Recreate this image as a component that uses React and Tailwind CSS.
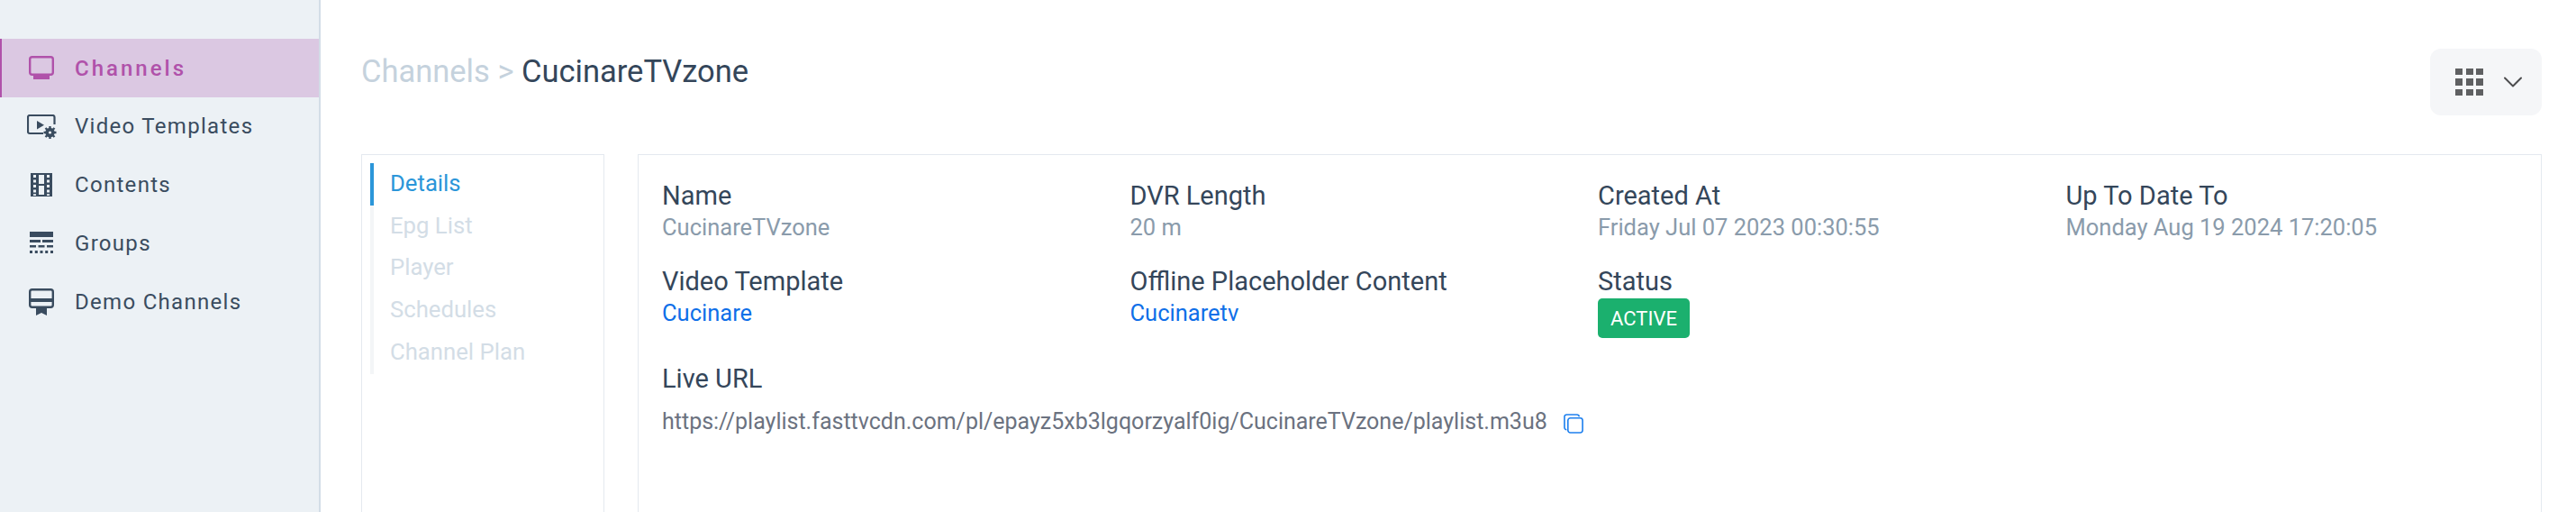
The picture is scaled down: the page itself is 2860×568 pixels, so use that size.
import { ChevronDown } from 'lucide-react'

const navItems = [
  { label: 'Channels', icon: MonitorIcon, active: true },
  { label: 'Video Templates', icon: TemplateIcon },
  { label: 'Contents', icon: FilmIcon },
  { label: 'Groups', icon: GroupsIcon },
  { label: 'Demo Channels', icon: DemoIcon },
]

const tabs = ['Epg List', 'Player', 'Schedules', 'Channel Plan']

function MonitorIcon() {
  return (
    <svg width="28" height="27" viewBox="0 0 28 27" fill="none">
      <rect x="1.2" y="1.2" width="25.6" height="19.6" rx="2.5" stroke="currentColor" strokeWidth="2.4" />
      <path d="M5 22h18v4H5z" fill="currentColor" />
    </svg>
  )
}

function TemplateIcon() {
  return (
    <svg width="33" height="27" viewBox="0 0 33 27" fill="none">
      <path d="M18 21H3a2 2 0 0 1-2-2V3a2 2 0 0 1 2-2h25.5a2 2 0 0 1 2 2v8" stroke="currentColor" strokeWidth="2.2" />
      <path d="M11 7v9.500l8-4.800z" fill="currentColor" />
      <circle cx="25.500" cy="20" r="3.400" stroke="currentColor" strokeWidth="3.600" />
      <path d="M25.500 13v3M25.500 24v3M18.500 20h3M29.500 20h3M20.500 15l2 2M28.500 23l2 2M20.500 25l2-2M28.500 17l2-2" stroke="currentColor" strokeWidth="2.400" />
    </svg>
  )
}

function FilmIcon() {
  return (
    <svg width="24" height="26" viewBox="0 0 24 26" fill="currentColor">
      <path fillRule="evenodd" d="M0 0h24v26H0zM3 2v3h3V2zm15 0v3h3V2zM3 7.500v3h3v-3zm15 0v3h3v-3zM3 13v3h3v-3zm15 0v3h3v-3zM3 18.500v3h3v-3zm15 0v3h3v-3zM9 2v10h6V2zm0 12v10h6V14zM3 23.200V25h3v-1.800zm15 0V25h3v-1.800z" />
    </svg>
  )
}

function GroupsIcon() {
  return (
    <svg width="26" height="25" viewBox="0 0 26 25" fill="currentColor">
      <path d="M0 0h26v6H0zM0 9h12v3H0zM14 9h12v3H14zM0 15h7v2.500H0zM9.500 15h7v2.500h-7zM19 15h7v2.500h-7zM0 21h3v3H0zM5.800 21h3v3h-3zM11.500 21h3v3h-3zM17.200 21h3v3h-3zM23 21h3v3h-3z" />
    </svg>
  )
}

function DemoIcon() {
  return (
    <svg width="28" height="30" viewBox="0 0 28 30" fill="none">
      <rect x="1.200" y="1.200" width="25.600" height="19.600" rx="2.500" stroke="currentColor" strokeWidth="2.400" />
      <path d="M1 11h26v4H1z" fill="currentColor" />
      <path d="M8 21h12v9l-6-3-6 3z" fill="currentColor" />
    </svg>
  )
}

function GridIcon() {
  return (
    <div className="grid grid-cols-[repeat(3,8px)] gap-x-[3.500px] gap-y-[4px]">
      {Array.from({ length: 9 }).map((_, i) => (
        <div key={i} className="w-2 h-[7.500px] bg-[#5f6062]" />
      ))}
    </div>
  )
}

function CopyIcon() {
  return (
    <svg width="22" height="22" viewBox="0 0 23 23" fill="none" stroke="#1f80ee" strokeWidth="1.700">
      <path d="M3.500 18.500A2.500 2.500 0 0 1 1 16V3.500A2.500 2.500 0 0 1 3.500 1H15.500A2.500 2.500 0 0 1 18 3.500" />
      <rect x="5" y="5" width="17" height="17" rx="2.800" />
    </svg>
  )
}

const Field = ({ label, children }) => (
  <div className="w-[519.500px]">
    <div className="text-[29px] leading-[36px] text-[#34465a]">{label}</div>
    {children}
  </div>
)

const Value = ({ children }) => (
  <div className="text-[25.500px] leading-[34px] text-[#8a9bab]">{children}</div>
)

const LinkValue = ({ children }) => (
  <div className="text-[25.500px] leading-[34px] text-[#0f6fe8]">{children}</div>
)

export default function App() {
  return (
    <div className="flex w-[2860px] h-[568px] overflow-hidden bg-white font-['Roboto',sans-serif]">
      <aside className="w-[356px] shrink-0 bg-[#ecf1f5] border-r-2 border-[#d3dde7] pt-[43px]">
        {navItems.map((item) => (
          <div
            key={item.label}
            className={
              item.active
                ? 'flex items-center h-[65px] border-l-2 border-[#b052aa] bg-[#dbc8e2] text-[#b052aa] font-medium'
                : 'flex items-center h-[64.800px] border-l-2 border-transparent text-[#3a4c5f]'
            }
          >
            <div className="w-[34px] ml-[27px] flex justify-center">
              <item.icon />
            </div>
            <span className={item.active ? 'ml-[20px] text-[24px] tracking-[3px]' : 'ml-[20px] text-[24px] tracking-[1.300px]'}>
              {item.label}
            </span>
          </div>
        ))}
      </aside>

      <main className="flex-1 pl-[45px] pr-[38px] pt-[54px]">
        <div className="flex justify-between items-start h-[74px]">
          <div className="text-[34.500px] leading-[48px] pt-[1px] text-[#34465a]">
            <span className="text-[#c5d2dd]">Channels &gt; </span>
            CucinareTVzone
          </div>
          <div className="flex items-center w-[124px] h-[74px] rounded-[12px] bg-[#f5f6f8] pl-[28px]">
            <GridIcon />
            <ChevronDown className="ml-[15px] text-[#4c4c4e]" size={36} strokeWidth={1.300} />
          </div>
        </div>

        <div className="flex mt-[43px] h-[420px]">
          <div className="w-[270px] shrink-0 border border-[#e4e9ef] pt-[9px] pl-[9px]">
            <div className="border-l-4 border-[#2b96d9] h-[47px] flex items-center pl-[18px] pb-[3px] text-[25.700px] text-[#2b96d9]">
              Details
            </div>
            {tabs.map((tab) => (
              <div key={tab} className="border-l-4 border-[#f3f5f7] h-[46.800px] flex items-center pl-[18px] pb-[3px] text-[25.700px] text-[#d3dde6]">
                {tab}
              </div>
            ))}
          </div>

          <div className="flex-1 ml-[37px] border border-[#e4e9ef] pl-[26px] pt-[27px]">
            <div className="flex">
              <Field label="Name"><Value>CucinareTVzone</Value></Field>
              <Field label="DVR Length"><Value>20 m</Value></Field>
              <Field label="Created At"><Value>Friday Jul 07 2023 00:30:55</Value></Field>
              <Field label="Up To Date To"><Value>Monday Aug 19 2024 17:20:05</Value></Field>
            </div>
            <div className="flex mt-[25px]">
              <Field label="Video Template"><LinkValue>Cucinare</LinkValue></Field>
              <Field label="Offline Placeholder Content"><LinkValue>Cucinaretv</LinkValue></Field>
              <Field label="Status">
                <div className="flex items-center justify-center w-[102px] h-[44px] mt-[1px] rounded-[5px] bg-[#1bb06e] text-[22px] text-white">
                  ACTIVE
                </div>
              </Field>
            </div>
            <div className="mt-[27px] text-[29px] leading-[37px] text-[#34465a]">Live URL</div>
            <div className="flex items-center mt-[12px] text-[25px] leading-[34px] text-[#6b7280]">
              https://playlist.fasttvcdn.com/pl/epayz5xb3lgqorzyalf0ig/CucinareTVzone/playlist.m3u8
              <span className="ml-[18px] mt-[3px]"><CopyIcon /></span>
            </div>
          </div>
        </div>
      </main>
    </div>
  )
}
